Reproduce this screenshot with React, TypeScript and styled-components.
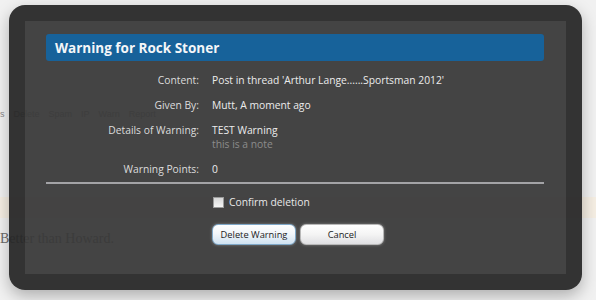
import React from "react";
import styled, { createGlobalStyle } from "styled-components";

const GlobalStyle = createGlobalStyle`
  html, body {
    margin: 0;
    padding: 0;
    background: #f1f1f1;
  }
  body {
    width: 596px;
    height: 300px;
    overflow: hidden;
    font-family: "Liberation Serif", serif;
  }
`;

const Page = styled.div`
  position: relative;
  width: 596px;
  height: 300px;
  background: #f1f1f1;
`;

const PageContent = styled.div`
  display: flex;
  flex-direction: column;
  padding-top: 109px;
`;

const LinkRow = styled.div`
  display: flex;
  gap: 9px;
  font-family: "Liberation Sans", sans-serif;
  font-size: 9px;
  color: #8a8a8a;
  height: 12px;
`;

const MessageBar = styled.div`
  margin-top: 76px;
  height: 21px;
  background: #f5eee3;
`;

const Signature = styled.div`
  margin-top: 13px;
  font-size: 14px;
  color: #6a6a6a;
`;

const Dialog = styled.div`
  position: absolute;
  left: 9px;
  top: 5px;
  width: 498px;
  height: 240px;
  border: 16px solid rgba(38, 38, 38, 0.94);
  border-radius: 16px;
  background: rgba(56, 56, 56, 0.94);
  background-clip: padding-box;
  box-shadow: 0 6px 16px rgba(0, 0, 0, 0.28);
  padding: 13px 22px 0 21px;
  font-family: "Open Sans", sans-serif;
  font-size: 10.3px;
  color: #e8e8e8;
`;

const TitleBar = styled.h2`
  margin: 0;
  height: 27px;
  display: flex;
  align-items: center;
  padding-left: 9px;
  background: #17629a;
  border-radius: 3px;
  font-family: "Open Sans", sans-serif;
  font-weight: 700;
  font-size: 13.5px;
  color: #f4f6f8;
`;

const Form = styled.div`
  display: grid;
  grid-template-columns: 153px 1fr;
  column-gap: 13px;
  row-gap: 11px;
  margin-top: 12px;
  line-height: 14px;
`;

const Label = styled.div`
  text-align: right;
  color: #dcdcdc;
`;

const Value = styled.div`
  color: #ececec;
`;

const Note = styled.div`
  color: #8c8c8c;
`;

const Divider = styled.hr`
  margin: 6px 0 0;
  border: 0;
  height: 2px;
  background: #a3a3a6;
`;

const Actions = styled.div`
  display: flex;
  flex-direction: column;
  padding-left: 166px;
`;

const CheckRow = styled.label`
  display: flex;
  align-items: center;
  gap: 5px;
  margin-top: 11px;
  height: 14px;
  color: #e8e8e8;
`;

const Box = styled.span`
  width: 9px;
  height: 9px;
  margin-left: 1px;
  border: 1px solid #9a9a9a;
  background: linear-gradient(#d8d8d8, #f4f4f4);
`;

const Buttons = styled.div`
  display: flex;
  gap: 4px;
  margin-top: 15px;
`;

const Button = styled.button<{ $focused?: boolean }>`
  width: 84px;
  height: 21px;
  padding: 0;
  border-radius: 6px;
  border: 1px solid ${(p) => (p.$focused ? "#7fa8c8" : "#b8b8b8")};
  background: ${(p) =>
    p.$focused
      ? "linear-gradient(#ffffff 0%, #f2f6fa 45%, #cfe2f1 100%)"
      : "linear-gradient(#ffffff 0%, #f4f4f4 50%, #dfdfe2 100%)"};
  box-shadow: 0 0 3px rgba(255, 255, 255, 0.35);
  font-family: "Open Sans", sans-serif;
  font-size: 9.3px;
  color: #222;
`;

export default function App() {
  return (
    <Page>
      <GlobalStyle />
      <PageContent>
        <LinkRow>
          <span>s</span>
          <span>Delete</span>
          <span>Spam</span>
          <span>IP</span>
          <span>Warn</span>
          <span>Report</span>
        </LinkRow>
        <MessageBar />
        <Signature>Better than Howard.</Signature>
      </PageContent>

      <Dialog>
        <TitleBar>Warning for Rock Stoner</TitleBar>
        <Form>
          <Label>Content:</Label>
          <Value>Post in thread 'Arthur Lange......Sportsman 2012'</Value>
          <Label>Given By:</Label>
          <Value>Mutt, A moment ago</Value>
          <Label>Details of Warning:</Label>
          <Value>
            TEST Warning
            <Note>this is a note</Note>
          </Value>
          <Label>Warning Points:</Label>
          <Value>0</Value>
        </Form>
        <Divider />
        <Actions>
          <CheckRow>
            <Box />
            Confirm deletion
          </CheckRow>
          <Buttons>
            <Button $focused>Delete Warning</Button>
            <Button>Cancel</Button>
          </Buttons>
        </Actions>
      </Dialog>
    </Page>
  );
}
